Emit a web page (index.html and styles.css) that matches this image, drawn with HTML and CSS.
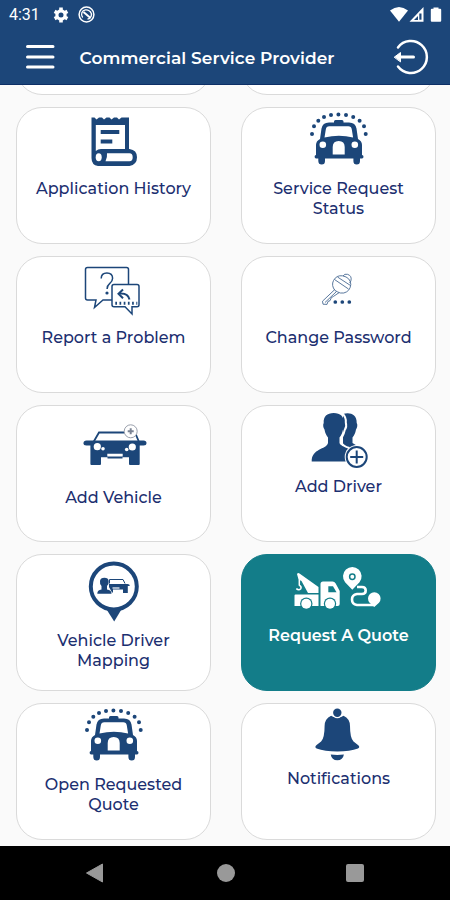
FILE: index.html
```html
<!DOCTYPE html>
<html lang="en">
<head>
  <meta charset="UTF-8" />
  <meta name="viewport" content="width=device-width, initial-scale=1.0" />
  <title>Commercial Service Provider</title>
  <link rel="stylesheet" href="styles.css">
</head>
<body>
  <!-- Taxi icon, used by two cards -->
  <svg class="sprite">
    <symbol id="taxi" viewBox="0 1 99 71">
      <path d="M23 27h.01M25 19.3h.01M29.3 13.7h.01M35 10h.01M42 8h.01M49.4 7.6h.01M57 8h.01M64.2 10h.01M70.6 13.7h.01M75 19.3h.01M76.7 27h.01" stroke="currentColor" stroke-width="4" stroke-linecap="round" />
      <path d="M45 15.500v-1q0-1.500 1.500-1.500h6.500q1.500 0 1.500 1.500v1H60q6.500 0 7.500 6l1.500 10.500q4 2 4 6v10q1.500 0 1.500 1.700t-1.500 1.700h-2V54q0 3.500-3.300 3.500T64.400 54v-2.600H36V54q0 3.500-3.300 3.500T29.300 54v-2.600h-2.200q-1.500 0-1.500-1.700T27 48V38q0-4 4-6l1.500-10.500q1-6 7.500-6z" fill="currentColor" />
      <path d="M35.500 30.500l1.300-8q.5-3.300 3.500-3.300h19q3 0 3.500 3.300l1.300 8Q50 27 35.500 30.500zM43.700 47.500V40q0-6 6-6t6 6v7.500z" fill="#fff" />
      <circle cx="33.800" cy="37.700" r="3.300" fill="#fff" />
      <circle cx="65.800" cy="37.700" r="3.300" fill="#fff" />
    </symbol>
  </svg>

  <div class="screen">
    <header class="header">
      <div class="status-bar">
        <span class="time">4:31</span>
        <svg class="gear" width="16" height="16" viewBox="-8 -8 16 16">
          <circle r="4.100" fill="none" stroke="#fff" stroke-width="3.200" />
          <path d="M0-7.400v2.500M0 7.400V4.900M-6.400-3.700l2.200 1.200M6.400 3.700L4.200 2.500M-6.400 3.700l2.200-1.200M6.400-3.700L4.200-2.500" stroke="#fff" stroke-width="3.600" />
        </svg>
        <svg class="sync" width="17" height="17" viewBox="-8.500 -8.500 17 17" fill="none" stroke="#fff">
          <circle r="7.400" stroke-width="1.500" />
          <path d="M-3.800 3A4.700 4.700 0 0 1-1-4.700Q3-5 4.500-1.500M3.800-3A4.700 4.700 0 0 1 1 4.700" stroke-width="1.300" />
          <path d="M-3-2.500L4 3.500" stroke-width="2" />
        </svg>
        <svg class="signals" width="52" height="17" viewBox="0 0 52 17">
          <path d="M0 4.500q9-7 18 0L9 15.700z" fill="#fff" />
          <path d="M33.500 1v14.700H19.500z" fill="#fff" />
          <path d="M29.300 7.500h2.200v6.200h-2.200z" fill="#1c4679" />
          <path d="M24 14l4-4v4z" fill="#1c4679" />
          <path d="M43.500 1.500h5v1.300h1.700q1 0 1 1v10.900q0 1-1 1h-8.400q-1 0-1-1V3.800q0-1 1-1h1.700z" fill="#fff" />
        </svg>
      </div>
      <div class="title-bar">
        <svg width="30" height="26" viewBox="0 0 30 26" stroke="#fff" stroke-width="3" stroke-linecap="round">
          <path d="M2.500 2.500H28M2.500 13H28M2.500 23H28" />
        </svg>
        <h1>Commercial Service Provider</h1>
        <svg class="logout" width="36" height="36" viewBox="0 0 36 36" fill="none" stroke="#fff" stroke-width="2.500" stroke-linecap="round">
          <path d="M5 8.500a16 16 0 1 1 0 19" />
          <path d="M6 18h14.500" stroke-width="3" />
          <path d="M1.500 18l6-4.500v9z" fill="#fff" stroke-width="1" />
        </svg>
      </div>
    </header>

    <main class="content">
      <div class="grid">
        <!-- Row scrolled under the header -->
        <div class="card"></div>
        <div class="card"></div>

        <div class="card">
          <svg class="icon" viewBox="0 1 99 71">
            <path d="M27.500 10.500h3l2 2 2.500-2h3l2 2 2.500-2h3l2 2 2.500-2h3l2 2 2.500-2H65V42h.5q7.500 1 7.500 8.300T65.500 59H34q-6.500-1-6.500-8z" fill="currentColor" />
            <path d="M31.800 18H61v24H37q-3 0-5.200 2zM43 46.200h22.500q3.200 0 3.200 4t-3.200 4H41.500q2-4 1.500-8z" fill="#fff" />
            <ellipse cx="34.700" cy="50.300" rx="3" ry="4" fill="#fff" />
            <path d="M36.700 25h18.600M36.700 34.500h11.600" stroke="currentColor" stroke-width="4" />
          </svg>
          <p>Application History</p>
        </div>
        <div class="card">
          <svg class="icon"><use href="#taxi" /></svg>
          <p>Service Request<br>Status</p>
        </div>

        <div class="card">
          <svg class="icon" viewBox="0 1 99 71" fill="none" stroke="currentColor" stroke-width="1.500">
            <path d="M48 44h-9l-8.500 7.500L32 44h-8.500q-2 0-2-2V13.500q0-2 2-2h39q2 0 2 2v15" />
            <path d="M50 28.500h23q2 0 2 2v18.300q0 2-2 2h-5V58l-7-7.200H50q-2 0-2-2V30.500q0-2 2-2z" />
            <path d="M59 33.500l-4.500 4.200 4.500 4.500M55 37.700q9-1 10.500 5.800" stroke-width="2" />
            <path d="M51.300 47.200h22" stroke-width="3" stroke-dasharray="1.700 2.500" />
            <path d="M37.200 22.500q0-5.500 5.700-5.500t5.700 5.300q0 3-3 5.300-2.500 2-2.500 5.400" />
            <circle cx="43" cy="37" r="1.600" fill="currentColor" stroke="none" />
          </svg>
          <p>Report a Problem</p>
        </div>
        <div class="card">
          <svg class="icon" viewBox="0 1 99 71" fill="none" stroke="currentColor">
            <g stroke-width=".9" opacity=".8">
              <path d="M46 34.500q-4-5-1.500-10 3-5.500 9-4.700 8 1.700 8.300 8.500-.5 7-7 8.700-4 .5-6-1z" />
              <path d="M54 20q1.500-2.500 4.500-1.700 4.500 1.500 3.500 6-.5 2-1.500 2.500M45.500 23.500l14 9.500M48.500 21l13 8.500" />
              <path d="M45.800 33.500L33.500 45.200l.5 3 4 .2 1-3 2-.7 1.300-3 2-1.200L50 36.700M36 46.500l11.500-11" />
            </g>
            <path d="M46.300 46h.01M53.300 46h.01M60.300 46h.01" stroke-width="3.700" stroke-linecap="round" />
          </svg>
          <p>Change Password</p>
        </div>

        <div class="card">
          <svg class="icon tall" viewBox="0 1 99 82">
            <path d="M29.500 37l5.500-9.500h36L75 37" fill="none" stroke="currentColor" stroke-width="1.800" />
            <path d="M19.500 38q0-2.500 3-2.500h57q3 0 3 2.500t-3 2.500H75.700V59q0 1-1 1H66q-1 0-1-1v-5.500H37V59q0 1-1 1h-8.600q-1 0-1-1V40.500h-4q-3 0-3-2.500z" fill="currentColor" />
            <path d="M43.300 48.700h15.400v2.700H43.300zM37 52.300h6.500v1.800H37zM58.500 52.300H65v1.800h-6.500z" fill="#fff" />
            <g fill="#fff">
              <circle cx="33.300" cy="41.700" r="3.600" />
              <circle cx="39" cy="43.700" r="1.800" />
              <circle cx="68.300" cy="42" r="3.600" />
              <circle cx="62.700" cy="44.500" r="1.800" />
            </g>
            <circle cx="66.700" cy="26.300" r="6.500" fill="#fff" stroke="#9aa0ac" />
            <path d="M66.700 23.300v6M63.700 26.300h6" stroke="#7c8494" stroke-width="2" />
          </svg>
          <p>Add Vehicle</p>
        </div>
        <div class="card">
          <svg class="icon" viewBox="0 1 99 71">
            <path d="M54 9C60 7 68 8.500 67.700 18c1.200 1.500.5 5-.7 6.500-.7 4-2 6-3.500 8V38l6.500 4v10H54z" fill="currentColor" />
            <path d="M34.700 18C34.200 11.500 38 8 44.700 8s10.500 3.500 10 10c1 1.500.5 5-.7 6.500-.7 4-2 6-3.500 8V38c2 5 13.500 4.500 13.500 11v7.500H22.700C22.700 43 37 45 39 38v-5.500c-1.500-2-2.800-4-3.500-8-1.300-1.500-1.800-5-.8-6.500z" fill="currentColor" />
            <path d="M53 8q4.500 4.500 3.800 9.500c.8 2.500.3 5.500-1.100 7.500-.7 4-2 6-3.200 8v4.500c1 3 4 4.500 8 5.500" fill="none" stroke="#fff" stroke-width="2" />
            <circle cx="67.700" cy="52" r="12" fill="#fff" />
            <g fill="none" stroke="currentColor" stroke-width="2">
              <circle cx="67.700" cy="52" r="10" />
              <path d="M67.700 45.500v13M61.200 52h13" />
            </g>
          </svg>
          <p>Add Driver</p>
        </div>

        <div class="card">
          <svg class="icon pin" viewBox="0 1 99 76">
            <circle cx="49.800" cy="32.500" r="23" fill="none" stroke="currentColor" stroke-width="4" />
            <path d="M42 54.500h16l-7.800 13z" fill="currentColor" />
            <path d="M33.300 39.700q0-3.700 4.200-4.200V32q-2-2-1.500-5 .5-3.200 4.400-3.200t4.300 3.200q.5 3-1.700 5v3.500q4.500.5 4.500 4.200z" fill="currentColor" />
            <path d="M45.500 29.500V25.500H59l2 4" fill="none" stroke="currentColor" stroke-width="1" />
            <path d="M45 30h18.500q2.300 0 2.300 2h-2v7H59v-3.500H49v3h-1l-3-5.500z" fill="currentColor" />
            <path d="M48.500 34h7" stroke="#fff" stroke-width="1.200" />
          </svg>
          <p>Vehicle Driver<br>Mapping</p>
        </div>
        <div class="card active">
          <svg class="icon" viewBox="0 1 99 71">
            <path d="M8 20q1-1.500 2.500-.5L29.500 33v6H19l-6.500-12-3-1.500zM6.500 40.500h23v11.500h-24V41.500q0-1 1-1zM31.500 52V30q0-2.500 2.500-2.500h9.500q2 0 3.200 2l4 7.500V50q0 2-2 2z" fill="#fff" />
            <path d="M10.300 25.500v5.700q2.500 1.500 1.500 3.500-2 2-4.500 0" fill="none" stroke="#fff" stroke-width="1.500" />
            <path d="M39.300 32.300h4.700l3.500 6h-8.200z" fill="#137d89" />
            <circle cx="17.300" cy="49.700" r="6.200" fill="#137d89" />
            <circle cx="41" cy="49.700" r="6.200" fill="#137d89" />
            <circle cx="17.300" cy="49.700" r="5" fill="#fff" />
            <circle cx="41" cy="49.700" r="5" fill="#fff" />
            <path d="M63.300 35.700l-7.200-7.400a9.300 9.300 0 1 1 14.400 0zM85.300 53l-4.700-4.200a6.300 6.300 0 1 1 9.400 0z" fill="#fff" />
            <circle cx="63.300" cy="22.700" r="2.700" fill="none" stroke="#137d89" stroke-width="1.500" />
            <path d="M68 33h5q3.700 0 3.700 3.500T73 40h-5q-5 .7-5 5.500t5 5.500h17" fill="none" stroke="#fff" stroke-width="2.600" />
          </svg>
          <p>Request A Quote</p>
        </div>

        <div class="card">
          <svg class="icon"><use href="#taxi" /></svg>
          <p>Open Requested<br>Quote</p>
        </div>
        <div class="card">
          <svg class="icon short" viewBox="0 1 99 65">
            <path d="M48.300 14.500q4.500 0 6.200-1.800 6.500 3 6.500 10.300 0 12 3.500 15.500L69 42q2.500 2 0 3.500-8 3-20.700 3t-20.700-3q-2.500-1.500 0-3.500l4.500-3.500q3.500-3.500 3.500-15.500 0-7.300 6.500-10.300 1.700 1.800 6.200 1.800z" fill="currentColor" />
            <circle cx="48.300" cy="10" r="5.200" fill="#fff" />
            <circle cx="48.300" cy="9.700" r="4.200" fill="currentColor" />
            <path d="M41.700 51.500q6.600.8 13.200 0-1 5.800-6.600 5.800t-6.600-5.800z" fill="currentColor" />
          </svg>
          <p>Notifications</p>
        </div>
      </div>
    </main>

    <nav class="nav-bar">
      <svg width="20" height="22" viewBox="0 0 20 22"><path d="M1.500 11L17.500 2v18z" fill="#999" stroke="#999" stroke-linejoin="round" /></svg>
      <span class="home"></span>
      <span class="recent"></span>
    </nav>
  </div>
</body>
</html>
```

FILE: styles.css
```css
body {
  margin: 0;
  font-family: "Montserrat", "Inter", sans-serif;
  background: #fafafa;
}
.sprite {
  display: none;
}
.screen {
  display: flex;
  flex-direction: column;
  height: 900px;
  overflow: hidden;
}
.header {
  flex: none;
  height: 85px;
  box-sizing: border-box;
  color: #fff;
  background: #1c4679;
  border-bottom: 1px solid #0d2f66;
}
.status-bar {
  display: flex;
  align-items: center;
  height: 29px;
  padding: 0 8px 0 9px;
}
.time {
  width: 44px;
  font-family: Roboto, sans-serif;
  font-size: 16px;
}
.sync {
  margin-left: 9px;
}
.signals {
  margin-left: auto;
}
.title-bar {
  display: flex;
  align-items: center;
  height: 56px;
  padding: 0 21px 0 24.500px;
}
h1 {
  margin: 2px 0 0 25px;
  font-size: 17px;
  font-weight: 600;
  letter-spacing: 0.07px;
  white-space: nowrap;
}
.logout {
  margin-left: auto;
}
.content {
  display: flex;
  flex: 1;
  flex-direction: column;
  justify-content: flex-end;
  min-height: 0;
  overflow: hidden;
  padding: 0 14px 6px 16px;
}
.grid {
  display: grid;
  grid-template-columns: 195px 195px;
  grid-auto-rows: 137px;
  gap: 12px 30px;
}
.card {
  box-sizing: border-box;
  border: 1px solid #dadada;
  border-radius: 26px;
  color: #1c4679;
  background: #fff;
  text-align: center;
}
.card p {
  margin: 0;
  color: #1c2f70;
  font-size: 16px;
  font-weight: 500;
  line-height: 20px;
}
.icon {
  display: block;
  width: 99px;
  height: 71px;
  margin: 0 auto;
}
.tall {
  height: 82px;
}
.pin {
  height: 76px;
}
.short {
  height: 65px;
}
.active {
  background: #137d89;
  border-color: #137d89;
}
.card.active p {
  color: #fff;
  font-weight: 600;
}
.nav-bar {
  display: flex;
  flex: none;
  align-items: center;
  justify-content: space-between;
  height: 54px;
  box-sizing: border-box;
  padding: 0 86px 0 85px;
  background: #000;
}
.home {
  width: 18px;
  height: 18px;
  border-radius: 50%;
  background: #999;
}
.recent {
  width: 18px;
  height: 18px;
  border-radius: 2px;
  background: #999;
}
```
